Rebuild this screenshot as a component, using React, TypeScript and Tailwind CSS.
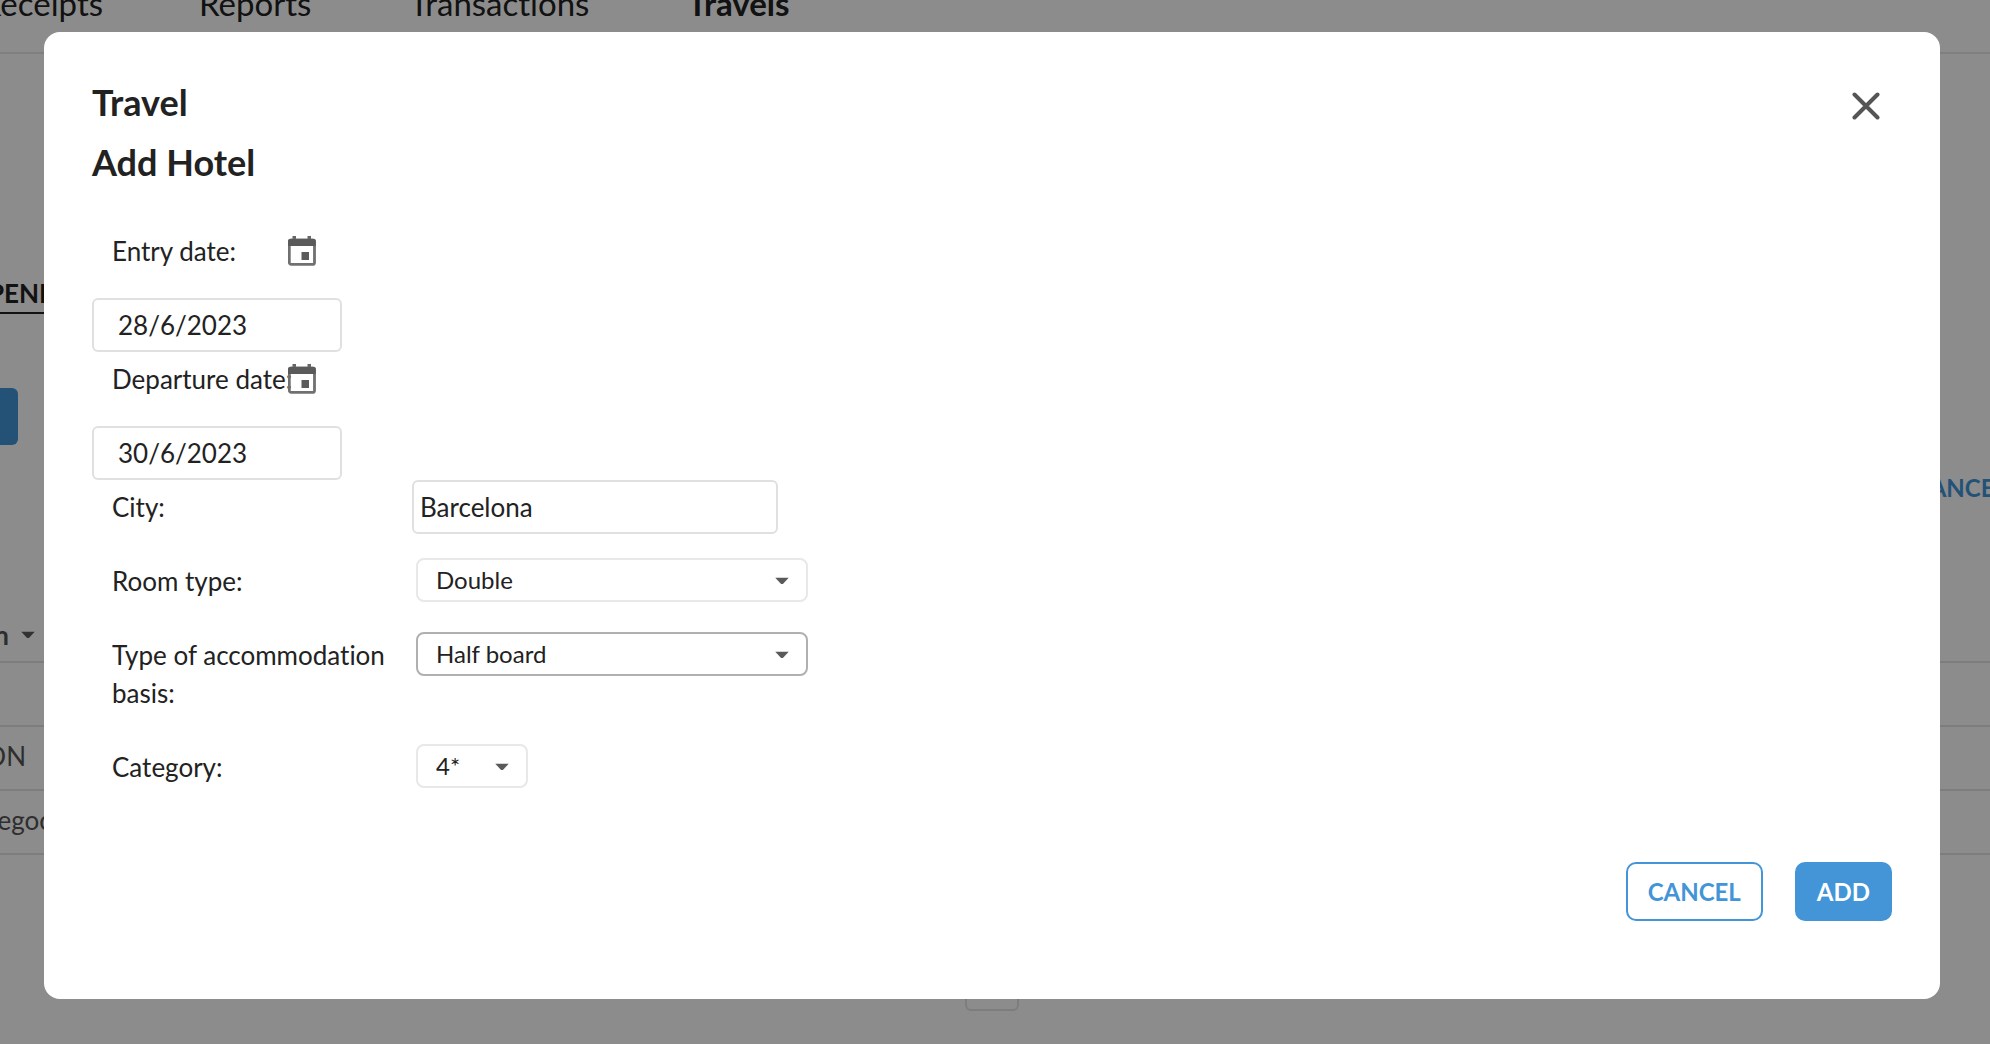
import { useState } from 'react';
import type { ReactNode } from 'react';

const navItems = ['Reports', 'Transactions', 'Travels'];

const roomTypes = ['Single', 'Double', 'Triple'];
const boardTypes = ['Room only', 'Bed and breakfast', 'Half board', 'Full board'];
const categories = ['1*', '2*', '3*', '4*', '5*'];

function Caret({ className }: { className: string }) {
  return (
    <svg viewBox="0 0 14 8" className={`h-2 w-3.5 ${className}`} aria-hidden="true">
      <path d="M0.3 0.8h13.4L8.4 6.4q-1.4 1.2-2.8 0z" fill="#5a5a5a" />
    </svg>
  );
}

function CalendarIcon() {
  return (
    <svg viewBox="0 0 28 30" className="h-[30px] w-7" aria-hidden="true">
      <path d="M4.5 0H8v5H4.5zM19.5 0H23v5h-3.5z" fill="#666" />
      <rect x="1.3" y="4" width="25.2" height="24.4" rx="2" fill="none" stroke="#707070" strokeWidth="2.8" />
      <path d="M0 5q0-2 2-2h23.800q2 0 2 2v5H0z" fill="#5a5a5a" />
      <rect x="13.5" y="16" width="7.500" height="8" fill="#5a5a5a" />
    </svg>
  );
}

type DateFieldProps = {
  id: string;
  label: string;
  value: string;
  onChange: (value: string) => void;
};

function DateField({ id, label, value, onChange }: DateFieldProps) {
  return (
    <div className="pt-2">
      <div className="mb-7 flex items-center pl-5">
        <label htmlFor={id} className="w-44 whitespace-nowrap">{label}</label>
        <button type="button" aria-label={`Choose ${id} date`}>
          <CalendarIcon />
        </button>
      </div>
      <input
        id={id}
        type="text"
        value={value}
        onChange={e => onChange(e.target.value)}
        className="block h-[54px] w-[250px] rounded-md border-2 border-[#e0e0e0] px-6"
      />
    </div>
  );
}

type SelectFieldProps = {
  id: string;
  label: string;
  options: string[];
  value: string;
  width: string;
  border: string;
  onChange: (value: string) => void;
};

function SelectField({ id, label, options, value, width, border, onChange }: SelectFieldProps) {
  return (
    <div className="flex items-start pt-3.5 pb-4 pl-5">
      <label htmlFor={id} className="w-[304px] shrink-0 pt-1 pr-4 pb-0.5">{label}</label>
      <div className={`relative ${width}`}>
        <select
          id={id}
          value={value}
          onChange={e => onChange(e.target.value)}
          className={`block h-11 w-full appearance-none rounded-lg border-2 bg-white pl-[18px] text-2xl outline-none ${border}`}
        >
          {options.map(o => <option key={o}>{o}</option>)}
        </select>
        <Caret className="pointer-events-none absolute top-[19px] right-[19px]" />
      </div>
    </div>
  );
}

// Cell at the left edge of the scrolled table, its text runs out of view
function EdgeCell({ className, children }: { className: string; children?: ReactNode }) {
  return (
    <div className={`flex h-16 items-center justify-end border-b-2 border-[#e3e3e3] pb-1 whitespace-nowrap ${className}`}>
      {children}
    </div>
  );
}

function TravelsPage() {
  return (
    <div className="h-screen overflow-hidden bg-white text-[26px] leading-[38px]">
      <nav className="-mt-4 flex h-[70px] border-b-2 border-[#e7e7e7] text-[33px] leading-[38px]">
        <div className="flex w-[103px] shrink-0 justify-end">
          <a href="#receipts">Receipts</a>
        </div>
        <div className="flex gap-[98px] pl-24">
          {navItems.map(item => (
            <a key={item} href={`#${item.toLowerCase()}`} className={item === 'Travels' ? 'font-bold' : ''}>
              {item}
            </a>
          ))}
        </div>
      </nav>

      <div className="mt-[220px] -ml-3 w-40 border-b-2 border-[#222] font-bold">PENDING</div>
      <div className="mt-[74px] h-[57px] w-[18px] rounded-r-md bg-[#4395d8]" />
      <div className="mt-[23px] -mr-[49px] flex justify-end text-2xl font-bold text-[#4395d8]">
        <a href="#cancel" className="leading-10">CANCELED</a>
      </div>

      <div className="mt-[90px]">
        <div className="flex h-[65px] items-start border-b-2 border-[#e3e3e3] pt-[18px] font-bold text-[#555]">
          <div className="flex w-[35px] items-center justify-end gap-3 whitespace-nowrap">
            Location
            <Caret className="shrink-0" />
          </div>
        </div>
        <EdgeCell className="" />
        <EdgeCell className="pr-[calc(100%-26px)] text-[#555]">LOCATION</EdgeCell>
        <EdgeCell className="pr-[calc(100%-84px)] text-[#555]">Negocios</EdgeCell>
      </div>

      <div className="mt-[102px] flex justify-center pr-1.5">
        <div className="h-[54px] w-[54px] rounded-md border-2 border-[#e3e3e3]" />
      </div>
    </div>
  );
}

export default function App() {
  const [entry, setEntry] = useState('28/6/2023');
  const [departure, setDeparture] = useState('30/6/2023');
  const [city, setCity] = useState('Barcelona');
  const [room, setRoom] = useState('Double');
  const [board, setBoard] = useState('Half board');
  const [category, setCategory] = useState('4*');

  return (
    <div className="font-['Lato',sans-serif] text-[#222] [font-variant-ligatures:none]">
      <TravelsPage />

      <div className="fixed inset-0 overflow-auto bg-black/45 pt-8 pr-[50px] pl-11">
        <div role="dialog" aria-modal="true" aria-labelledby="dialog-title" className="rounded-2xl bg-white px-12 pt-10 pb-[78px] text-[26px] leading-[38px]">
          <div className="mb-8 flex items-start justify-between">
            <div className="text-4xl font-bold">
              <h1 id="dialog-title" className="leading-[60px]">Travel</h1>
              <h2 className="leading-[60px]">Add Hotel</h2>
            </div>
            <button type="button" aria-label="Close" className="mt-5 mr-3">
              <svg viewBox="0 0 28 28" className="h-7 w-7" fill="none" stroke="#555" strokeWidth="4" strokeLinecap="round">
                <path d="M2.500 2.500l23 23M25.500 2.500l-23 23" />
              </svg>
            </button>
          </div>

          <form onSubmit={e => e.preventDefault()}>
            <DateField id="entry" label="Entry date:" value={entry} onChange={setEntry} />
            <DateField id="departure" label="Departure date:" value={departure} onChange={setDeparture} />

            <div className="flex items-start pb-2.5 pl-5">
              <label htmlFor="city" className="w-[300px] shrink-0 pt-2">City:</label>
              <input
                id="city"
                type="text"
                value={city}
                onChange={e => setCity(e.target.value)}
                className="h-[54px] w-[366px] rounded-md border-2 border-[#e0e0e0] px-1.5"
              />
            </div>

            <SelectField id="room" label="Room type:" options={roomTypes} value={room} onChange={setRoom} width="w-[392px]" border="border-[#e8e8e8]" />
            <SelectField id="board" label="Type of accommodation basis:" options={boardTypes} value={board} onChange={setBoard} width="w-[392px]" border="border-[#b0b0b0]" />
            <SelectField id="category" label="Category:" options={categories} value={category} onChange={setCategory} width="w-28" border="border-[#e8e8e8]" />

            <div className="mt-[58px] flex justify-end gap-8 text-2xl font-bold">
              <button type="button" className="h-[59px] rounded-[10px] border-2 border-[#4395d8] px-5 text-[#4395d8]">CANCEL</button>
              <button type="submit" className="h-[59px] rounded-[10px] border-2 border-[#4395d8] bg-[#4395d8] px-5 text-white">ADD</button>
            </div>
          </form>
        </div>
      </div>
    </div>
  );
}
